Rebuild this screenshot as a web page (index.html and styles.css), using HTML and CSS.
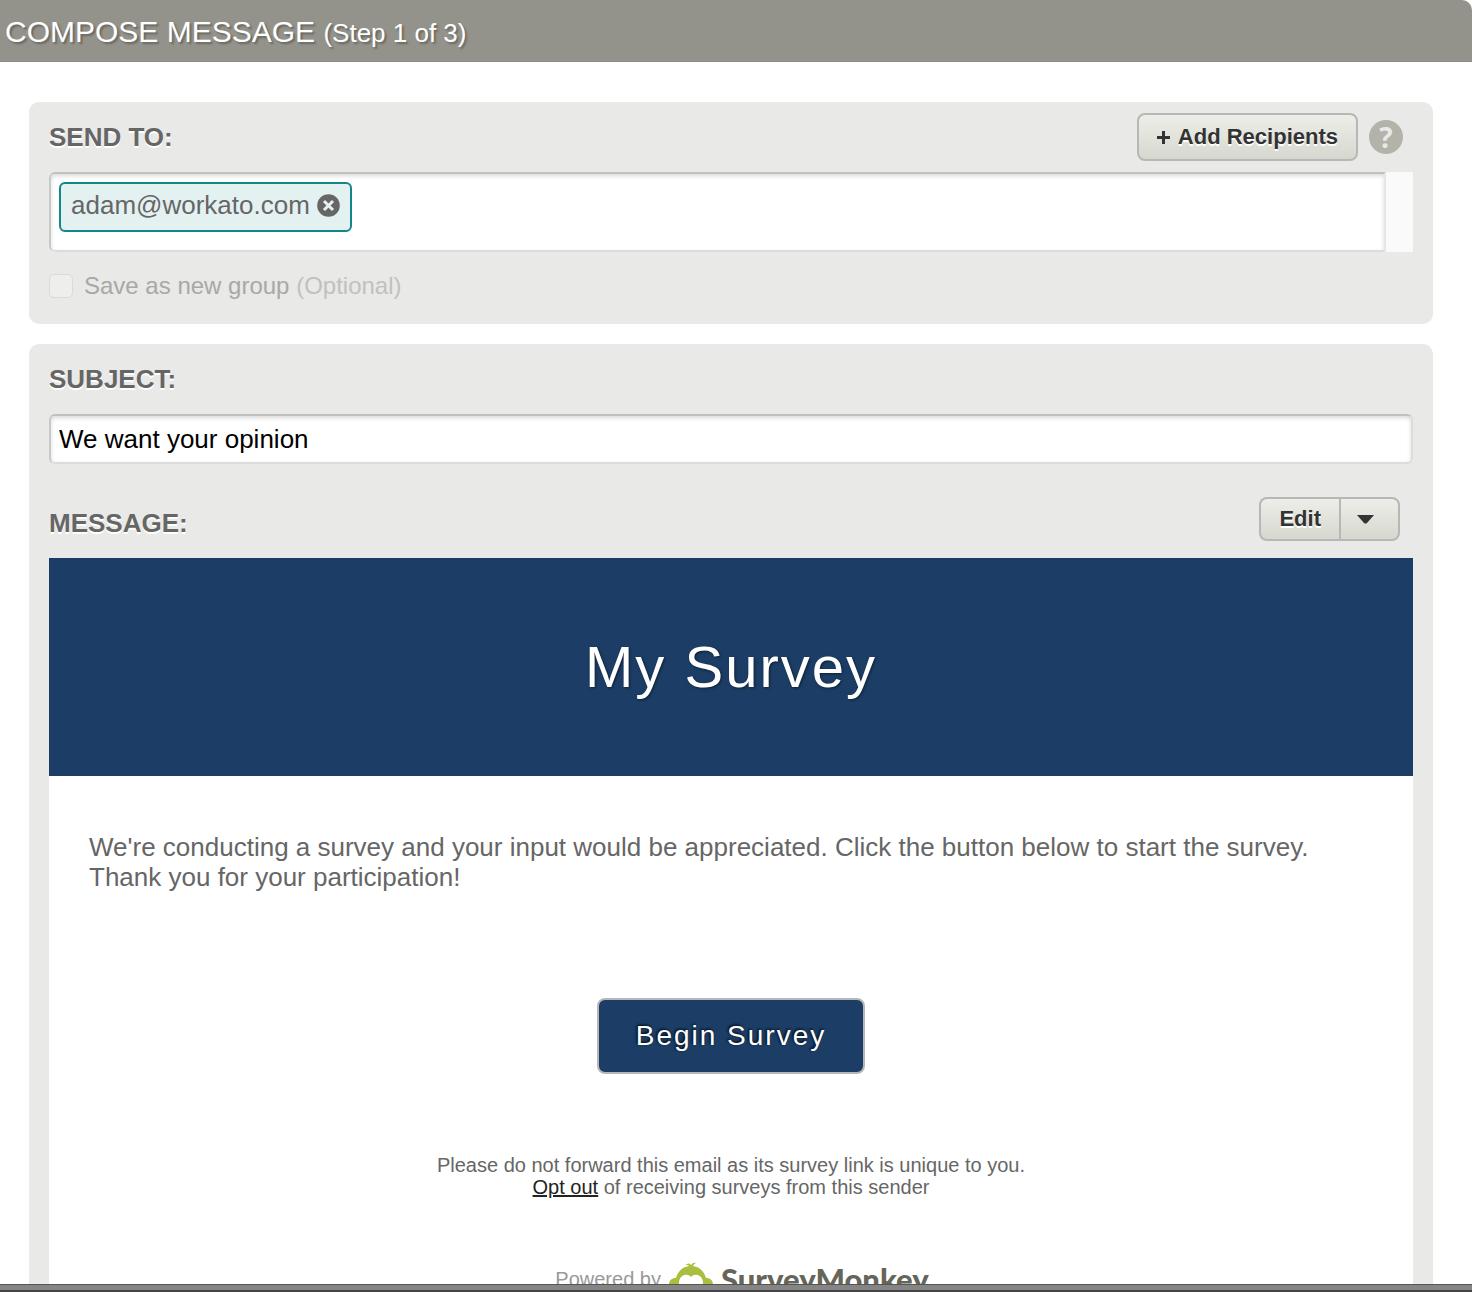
FILE: index.html
```
<!DOCTYPE html>
<html lang="en">
<head>
<meta charset="utf-8">
<title>Compose Message</title>
<link rel="stylesheet" href="styles.css">
</head>
<body>
<div class="dialog">
  <header class="dialog-header">
    <h1>COMPOSE MESSAGE <small>(Step 1 of 3)</small></h1>
  </header>

  <main class="dialog-body">
    <section class="panel recipients">
      <div class="panel-row">
        <h2 class="label" id="send-to">SEND TO:</h2>
        <div class="actions">
          <button class="btn add-btn" type="button">
            <svg width="13" height="13" viewBox="0 0 13 13" aria-hidden="true"><path d="M5 0h3v5h5v3H8v5H5V8H0V5h5z" fill="#333"/></svg>
            Add Recipients
          </button>
          <button class="help" type="button" aria-label="Help">?</button>
        </div>
      </div>
      <div class="recipient-scroll">
        <div class="recipient-box" role="group" aria-labelledby="send-to">
          <span class="tag">adam@workato.com
            <button class="tag-remove" type="button" aria-label="Remove adam@workato.com">
              <svg width="23" height="23" viewBox="0 0 23 23"><circle cx="11.500" cy="11.500" r="11.300" fill="#666"/><path d="M7 7l9 9M16 7l-9 9" stroke="#e4f1f1" stroke-width="3"/></svg>
            </button>
          </span>
        </div>
      </div>
      <label class="save-group"><input type="checkbox" disabled><span>Save as new group <span class="optional">(Optional)</span></span></label>
    </section>

    <section class="panel message">
      <div class="panel-row">
        <label class="label" for="subject">SUBJECT:</label>
      </div>
      <input class="subject" id="subject" type="text" value="We want your opinion">
      <div class="panel-row message-row">
        <h2 class="label">MESSAGE:</h2>
        <div class="btn-group">
          <button class="btn" type="button">Edit</button>
          <button class="btn menu-btn" type="button" aria-label="More edit options">
            <svg width="17" height="9" viewBox="0 0 17 9"><path d="M0 0h17L10 8q-1.500 1-3 0z" fill="#333"/></svg>
          </button>
        </div>
      </div>

      <article class="email">
        <h3 class="banner">My Survey</h3>
        <p class="intro">We're conducting a survey and your input would be appreciated. Click the button below to start the survey.<br>Thank you for your participation!</p>
        <button class="begin" type="button">Begin Survey</button>
        <p class="notice">Please do not forward this email as its survey link is unique to you.<br><a href="#">Opt out</a> of receiving surveys from this sender</p>
        <div class="powered">
          <span>Powered by</span>
          <svg width="44" height="34" viewBox="0 0 44 34" aria-hidden="true">
            <path d="M21 5Q19 2 16 3Q20 0 22 3Q24 0 27 1Q24 2 24 5z" fill="#a9bf3f"/>
            <path d="M22 4C30 4 35 9 37 16C42 16 44 19 44 23C44 28 40 30 37 29C34 33 29 34 22 34S10 33 7 29C4 30 0 28 0 23C0 19 2 16 7 16C9 9 14 4 22 4z" fill="#a9bf3f"/>
            <path d="M22 15C25 11 33 12 34 20C34 29 28 31 22 31S10 29 10 20C11 12 19 11 22 15z" fill="#fff"/>
          </svg>
          <strong>SurveyMonkey</strong>
        </div>
      </article>
    </section>
  </main>
  <div class="frame-edge"></div>
</div>
</body>
</html>
```
FILE: styles.css
```
* { box-sizing: border-box; }

body {
  margin: 0;
  background: #fff;
  color: #666;
  font: 26px/30px "Liberation Sans", Arial, sans-serif;
}

h1, h2, h3, p { margin: 0; font-weight: normal; }
button, input { font-family: inherit; }
button { cursor: pointer; }

.dialog {
  display: flex;
  flex-direction: column;
  height: 100vh;
}

.dialog-header {
  flex: none;
  padding: 14px 5px 12px;
  background: #94938b;
  border-bottom: 1px solid #8f8d87;
  border-top-right-radius: 10px;
  color: #fff;
  text-shadow: 2px 2px 2px rgba(0, 0, 0, .3);
}
.dialog-header h1 { font-size: 30px; line-height: 35px; }
.dialog-header small { font-size: 26px; line-height: 26px; }

.dialog-body {
  flex: 1;
  min-height: 0;
  overflow: hidden;
  padding: 40px 39px 0 29px;
}

.panel {
  margin-bottom: 20px;
  padding: 0 20px;
  background: #e9e9e7;
  border-radius: 10px;
}
.recipients { padding-bottom: 23px; }

.panel-row {
  display: flex;
  align-items: center;
  justify-content: space-between;
  height: 70px;
}

.label {
  font-size: 26px;
  font-weight: bold;
  text-shadow: 0 2px 0 #fff;
}

.actions { display: flex; align-items: center; gap: 11px; padding-right: 10px; }

.btn {
  display: flex;
  align-items: center;
  justify-content: center;
  height: 44px;
  padding: 0 18px;
  border: 2px solid #b7b7b7;
  border-radius: 8px;
  background: linear-gradient(#eeeee9, #d6d7ce);
  color: #333;
  font-size: 22px;
  font-weight: bold;
  text-shadow: 0 2px 0 #fff;
}
.add-btn { gap: 8px; height: 48px; }

.help {
  width: 34px;
  height: 34px;
  padding: 0;
  border: 0;
  border-radius: 50%;
  background: #b3b3aa;
  color: #e9e9e7;
  font: bold 28px/34px "Open Sans", sans-serif;
}

.recipient-scroll { padding-right: 27px; background: #fafafa; border-radius: 6px 0 0 6px; }
.recipient-box {
  height: 80px;
  padding: 8px;
  border: 2px solid;
  border-color: #c0c0c0 #e6e6e6 #dcdcdc #c8c8c8;
  border-radius: 6px 0 0 6px;
  background: #fff;
  box-shadow: inset 0 2px 4px rgba(0, 0, 0, .15);
}

.tag {
  display: inline-flex;
  gap: 7px;
  height: 50px;
  padding: 6px 10px 10px;
  border: 2px solid #13868a;
  border-radius: 6px;
  background: #e4f1f1;
}
.tag-remove { display: flex; align-items: center; padding: 0; border: 0; background: none; }

.save-group {
  display: flex;
  align-items: center;
  gap: 11px;
  margin-top: 19px;
  color: #a8a8a6;
  font-size: 24px;
}
.save-group input {
  appearance: none;
  width: 24px;
  height: 24px;
  margin: 0;
  border: 1px solid #dadad8;
  border-radius: 5px;
  background: #eeeeec;
}
.optional { color: #c1c1be; }

.subject {
  display: block;
  width: 100%;
  height: 50px;
  padding: 0 8px;
  border: 2px solid;
  border-color: #c0c0c0 #dcdcdc #dcdcdc #c8c8c8;
  border-radius: 6px;
  background: #fff;
  box-shadow: inset 0 2px 4px rgba(0, 0, 0, .15);
  color: #000;
  font-size: 26px;
}

.message-row { height: 94px; padding: 24px 13px 0 0; }
.message-row .btn-group { margin-bottom: 8px; }

.btn-group { display: flex; }
.btn-group .btn:first-child { border-right: 0; border-radius: 8px 0 0 8px; }
.btn-group .menu-btn { width: 61px; padding: 0 8px 0 0; border-radius: 0 8px 8px 0; }

.email {
  display: flex;
  flex-direction: column;
  align-items: center;
  padding-bottom: 40px;
  background: #fff;
}

.banner {
  width: 100%;
  padding: 74px 20px;
  background: #1c3e66;
  color: #fff;
  font-size: 58px;
  line-height: 70px;
  letter-spacing: 2px;
  text-align: center;
  text-shadow: 1px 1px 3px rgba(0, 0, 0, .5);
}

.intro { align-self: stretch; padding: 56px 40px 106px; }

.begin {
  height: 76px;
  padding: 0 37px;
  border: 2px solid #b7b7b7;
  border-radius: 8px;
  background: #1c3e66;
  color: #fff;
  font-size: 28px;
  letter-spacing: 2px;
  text-shadow: -1px -1px 3px #000;
}

.notice { padding-top: 80px; font-size: 20px; line-height: 22px; text-align: center; }
.notice a { color: #222; }

.powered {
  display: flex;
  align-items: center;
  gap: 8px;
  margin-top: 64px;
  padding-left: 22px;
  color: #999;
  font-size: 20px;
}
.powered strong { color: #66655a; font: 900 31px/34px Lato, sans-serif; }

.frame-edge {
  flex: none;
  height: 8px;
  border-top: 1px solid #555;
  border-bottom: 2px solid #444;
  background: #858585;
}
```
